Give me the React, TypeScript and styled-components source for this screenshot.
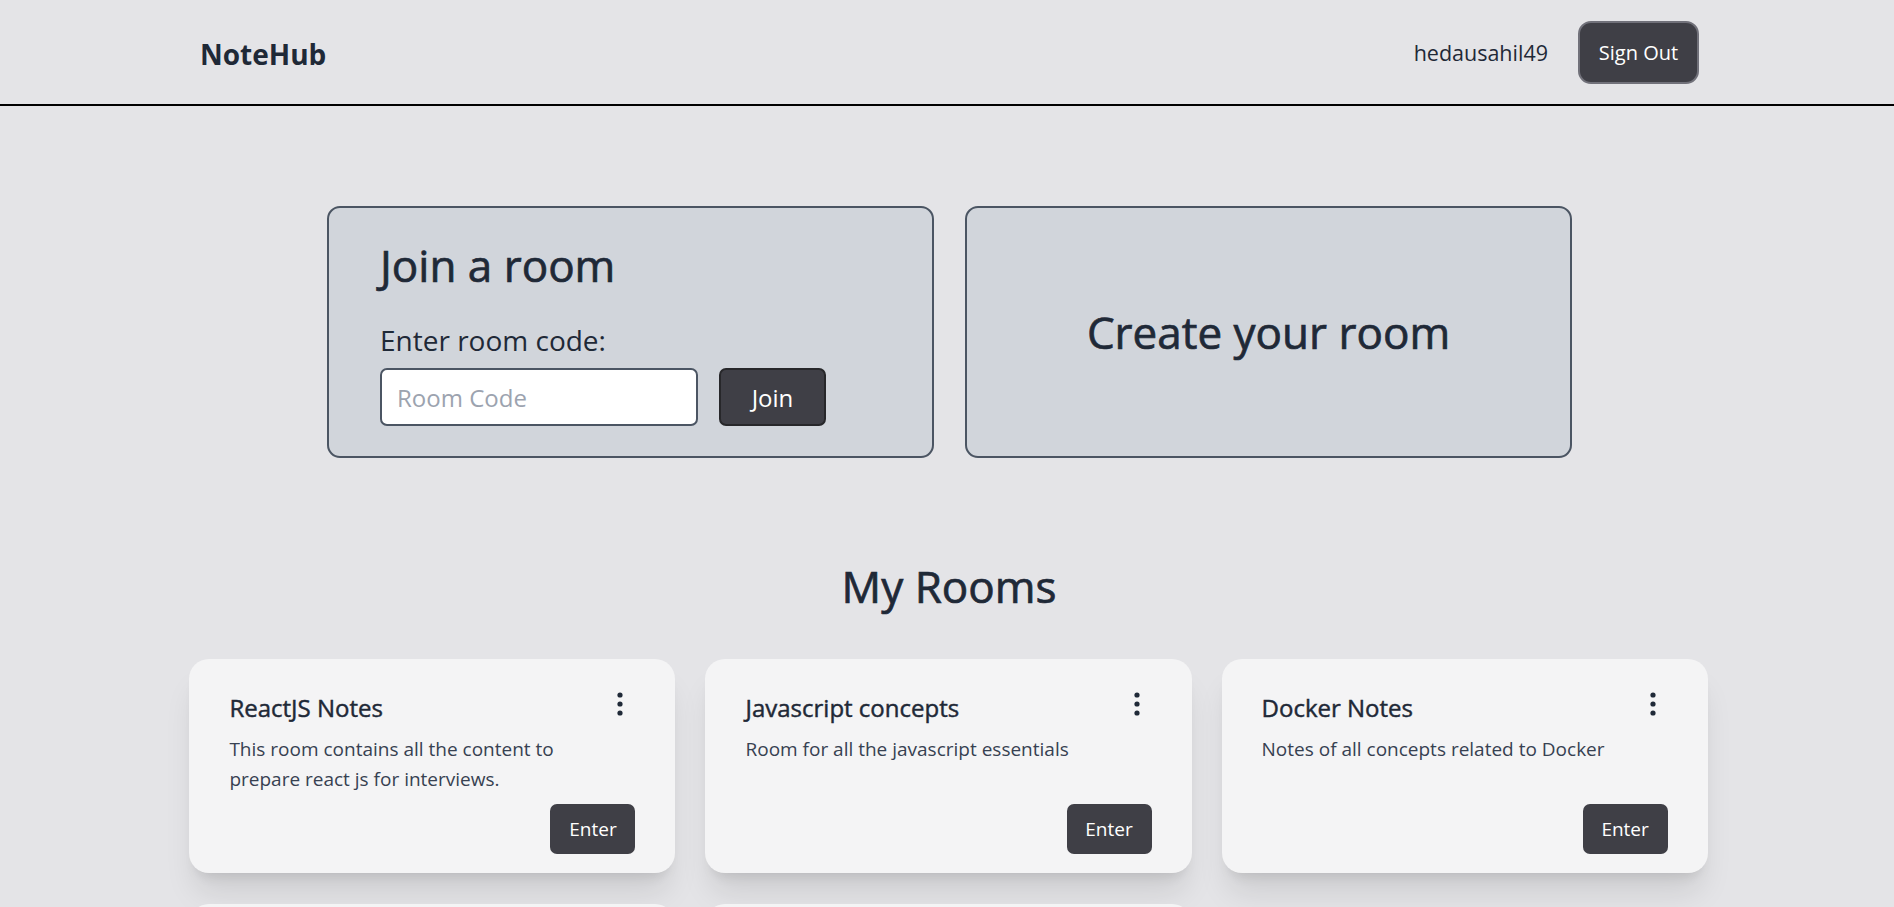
import React from "react";
import styled, { createGlobalStyle } from "styled-components";

const GlobalStyle = createGlobalStyle`
  html, body {
    margin: 0;
    padding: 0;
    background: #e4e4e7;
    font-family: "Open Sans", "Noto Sans", "Liberation Sans", sans-serif;
    color: #1f2937;
    scrollbar-width: none;
  }
  ::-webkit-scrollbar { display: none; }
  * { box-sizing: border-box; }
`;

const Page = styled.div`
  min-height: 100vh;
  background: #e4e4e7;
`;

const Header = styled.header`
  height: 106px;
  border-bottom: 2px solid #000;
  display: flex;
  align-items: center;
  justify-content: space-between;
  padding: 0 195px 0 200px;
`;

const Brand = styled.div`
  font-size: 28px;
  line-height: 36px;
  font-weight: 700;
  color: #1f2937;
  margin-top: 4px;
`;

const UserArea = styled.div`
  display: flex;
  align-items: center;
  gap: 30px;
`;

const UserName = styled.span`
  font-size: 21.5px;
  color: #1f2937;
`;

const SignOutButton = styled.button`
  width: 121px;
  height: 63px;
  border: 2px solid #71717a;
  border-radius: 13px;
  background: #3f3f46;
  color: #fff;
  font-family: inherit;
  font-size: 20px;
  cursor: pointer;
`;

const Main = styled.main`
  display: flex;
  flex-direction: column;
  align-items: center;
  padding-top: 100px;
`;

const ActionRow = styled.div`
  display: flex;
  gap: 31px;
  margin-left: 5px;
`;

const Panel = styled.section<{ $center?: boolean }>`
  width: 607px;
  height: 252px;
  background: #d1d5db;
  border: 2px solid #4b5563;
  border-radius: 13px;
  display: flex;
  flex-direction: column;
  ${(p) =>
    p.$center
      ? `align-items: center; justify-content: center;`
      : `padding: 30px 51px 0 51px;`}
`;

const PanelTitle = styled.h2`
  margin: 0;
  font-size: 44px;
  line-height: 54px;
  font-weight: 500;
  -webkit-text-stroke: 0.7px #1f2937;
  color: #1f2937;
`;

const FieldLabel = styled.label`
  margin-top: 32px;
  font-size: 28px;
  line-height: 32px;
  color: #1f2937;
`;

const JoinForm = styled.div`
  margin-top: 12px;
  display: flex;
  gap: 21px;
`;

const CodeInput = styled.input`
  width: 318px;
  height: 58px;
  border: 2px solid #4b5563;
  border-radius: 7px;
  background: #fff;
  padding: 0 15px;
  font-family: inherit;
  font-size: 24px;
  color: #1f2937;
  outline: none;
  &::placeholder {
    color: #9ca3af;
  }
`;

const JoinButton = styled.button`
  width: 107px;
  height: 58px;
  border: 2px solid #27272a;
  border-radius: 7px;
  background: #3f3f46;
  color: #fff;
  font-family: inherit;
  font-size: 24px;
  cursor: pointer;
`;

const SectionTitle = styled.h2`
  margin: 101px 0 0 4px;
  font-size: 44px;
  line-height: 54px;
  font-weight: 500;
  -webkit-text-stroke: 0.7px #1f2937;
  color: #1f2937;
`;

const RoomGrid = styled.div`
  margin: 46px 0 0 3px;
  width: calc(80% + 3px);
  display: grid;
  grid-template-columns: repeat(3, 1fr);
  column-gap: 30px;
  row-gap: 31px;
  padding-bottom: 60px;
`;

const RoomCard = styled.article`
  background: #f4f4f5;
  border-radius: 20px;
  padding: 31px 40px 19px;
  display: flex;
  flex-direction: column;
  box-shadow: 0 25px 31px -6px rgba(0, 0, 0, 0.1),
    0 10px 12px -7px rgba(0, 0, 0, 0.1);
`;

const RoomHead = styled.div`
  display: flex;
  align-items: center;
  justify-content: space-between;
`;

const RoomTitle = styled.h3`
  margin: 0;
  font-size: 24px;
  line-height: 35px;
  font-weight: 500;
  -webkit-text-stroke: 0.45px #1f2937;
  color: #1f2937;
`;

const MenuButton = styled.button`
  width: 30px;
  height: 30px;
  padding: 0;
  margin-top: -8px;
  border: none;
  background: transparent;
  display: flex;
  align-items: center;
  justify-content: center;
  cursor: pointer;
`;

const RoomDesc = styled.p`
  margin: 9px 0 0;
  max-width: 372px;
  font-size: 19px;
  line-height: 30px;
  color: #374151;
`;

const RoomFooter = styled.div`
  margin-top: auto;
  padding-top: 10px;
  display: flex;
  justify-content: flex-end;
`;

const EnterButton = styled.button`
  width: 85px;
  height: 50px;
  border: none;
  border-radius: 7px;
  background: #3f3f46;
  color: #fff;
  font-family: inherit;
  font-size: 19px;
  cursor: pointer;
`;

const KebabIcon = () => (
  <svg width="30" height="30" viewBox="0 0 30 30" fill="#1f2937" aria-hidden="true">
    <circle cx="15" cy="6" r="2.6" />
    <circle cx="15" cy="15" r="2.6" />
    <circle cx="15" cy="24" r="2.6" />
  </svg>
);

const rooms = [
  {
    title: "ReactJS Notes",
    desc: "This room contains all the content to prepare react js for interviews.",
  },
  { title: "Javascript concepts", desc: "Room for all the javascript essentials" },
  { title: "Docker Notes", desc: "Notes of all concepts related to Docker" },
  { title: "DSA Practice", desc: "Notes on data structures and algorithms" },
  { title: "System Design", desc: "Key concepts for system design rounds" },
];

export default function App() {
  return (
    <Page>
      <GlobalStyle />
      <Header>
        <Brand>NoteHub</Brand>
        <UserArea>
          <UserName>hedausahil49</UserName>
          <SignOutButton>Sign Out</SignOutButton>
        </UserArea>
      </Header>
      <Main>
        <ActionRow>
          <Panel>
            <PanelTitle>Join a room</PanelTitle>
            <FieldLabel htmlFor="room-code">Enter room code:</FieldLabel>
            <JoinForm>
              <CodeInput id="room-code" placeholder="Room Code" />
              <JoinButton>Join</JoinButton>
            </JoinForm>
          </Panel>
          <Panel $center>
            <PanelTitle>Create your room</PanelTitle>
          </Panel>
        </ActionRow>
        <SectionTitle>My Rooms</SectionTitle>
        <RoomGrid>
          {rooms.map((r) => (
            <RoomCard key={r.title}>
              <RoomHead>
                <RoomTitle>{r.title}</RoomTitle>
                <MenuButton aria-label="Room options">
                  <KebabIcon />
                </MenuButton>
              </RoomHead>
              <RoomDesc>{r.desc}</RoomDesc>
              <RoomFooter>
                <EnterButton>Enter</EnterButton>
              </RoomFooter>
            </RoomCard>
          ))}
        </RoomGrid>
      </Main>
    </Page>
  );
}
